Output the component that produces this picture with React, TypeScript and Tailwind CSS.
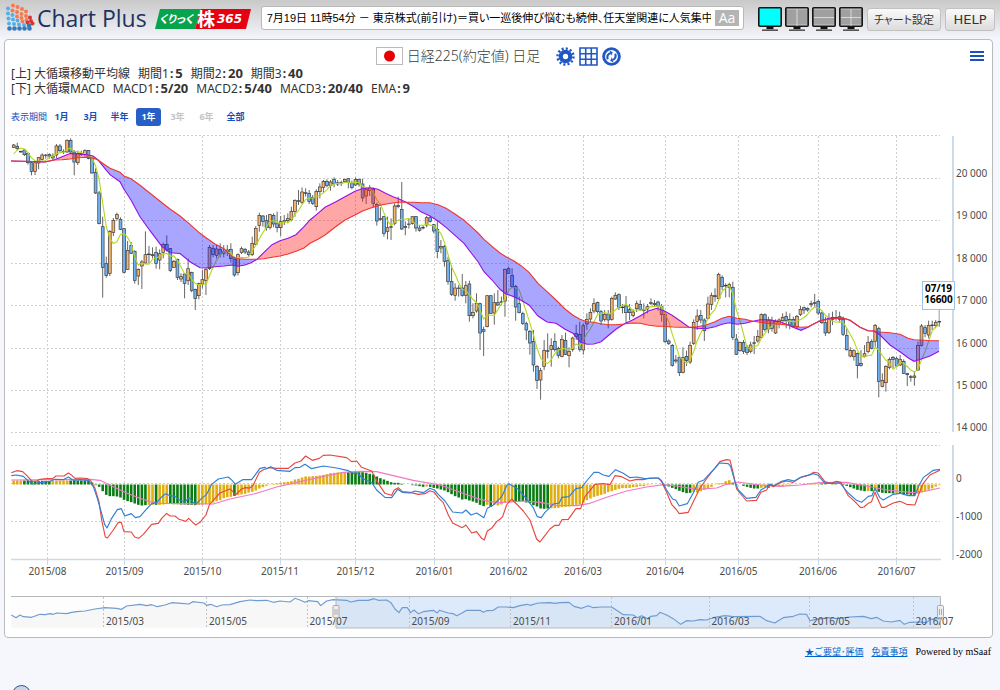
import type { ReactNode } from "react";

type Candle = [open: number, high: number, low: number, close: number];
type BandPoint = [x: number, mid: number, slow: number];

// Candle rows are kept in thirds of a pixel, measured down from `top`
const SESSIONS: { top: number; rows: Candle[] }[] = [
  {
    top: 130,
    rows: [
      [52, 42, 54, 45], [49, 38, 62, 56], [64, 62, 68, 66], [60, 57, 78, 74], [70, 68, 104, 98],
      [98, 95, 136, 124], [124, 95, 135, 98], [99, 84, 118, 82], [88, 70, 92, 75], [75, 72, 86, 76],
      [74, 70, 86, 78], [84, 70, 90, 78], [75, 42, 85, 48], [48, 42, 68, 62], [64, 58, 72, 65],
      [66, 28, 68, 31], [31, 25, 70, 66], [66, 60, 136, 96], [98, 62, 105, 70], [70, 62, 78, 74],
      [74, 58, 80, 62], [61, 60, 88, 85], [86, 84, 131, 129], [127, 115, 192, 189], [189, 183, 283, 281],
      [290, 260, 503, 412], [401, 380, 443, 436], [430, 300, 438, 304], [307, 264, 318, 271], [265, 248, 272, 254],
      [268, 262, 300, 298], [296, 294, 430, 427], [418, 333, 420, 361], [346, 336, 372, 370], [364, 361, 461, 451],
      [438, 415, 465, 418], [408, 390, 477, 396], [399, 304, 402, 374], [372, 348, 400, 374], [374, 352, 385, 377],
      [367, 350, 416, 400], [390, 358, 418, 371], [367, 338, 385, 343], [343, 316, 365, 360], [356, 354, 426, 421],
      [412, 390, 414, 394], [388, 386, 450, 442], [447, 430, 456, 440], [432, 430, 505, 460], [452, 386, 465, 416],
      [427, 425, 487, 481], [478, 476, 540, 505], [497, 458, 508, 461], [461, 420, 475, 449], [451, 415, 495, 419],
      [416, 345, 420, 352], [355, 345, 382, 374], [376, 345, 385, 357], [358, 340, 382, 372], [370, 345, 382, 365],
      [365, 345, 378, 360], [358, 340, 398, 386], [387, 380, 440, 435], [428, 370, 436, 374], [367, 350, 372, 356],
      [358, 354, 372, 366], [366, 360, 380, 374], [374, 320, 378, 340], [343, 288, 345, 295], [286, 248, 305, 256],
      [258, 255, 290, 274], [272, 255, 302, 292], [292, 252, 298, 254], [256, 250, 292, 282], [280, 245, 307, 293],
      [293, 258, 318, 275], [275, 255, 285, 272], [272, 250, 280, 266], [269, 230, 274, 244], [244, 208, 260, 211],
      [212, 180, 225, 214], [217, 172, 222, 186], [188, 175, 200, 190], [190, 180, 222, 214], [202, 195, 225, 220],
      [230, 178, 242, 184], [185, 160, 205, 171], [172, 150, 188, 154], [154, 148, 172, 166],
    ],
  },
  {
    top: 150,
    rows: [
      [107, 90, 122, 96], [88, 82, 112, 101], [98, 90, 108, 102], [98, 92, 108, 99], [95, 86, 98, 88],
      [86, 86, 115, 98], [100, 92, 118, 112], [105, 83, 108, 88], [88, 86, 110, 102], [102, 86, 155, 144],
      [138, 112, 162, 118], [122, 105, 138, 115], [118, 112, 172, 160], [163, 158, 227, 213], [208, 172, 212, 206],
      [200, 198, 260, 250], [244, 200, 268, 233], [232, 205, 270, 230], [220, 160, 226, 168], [166, 140, 175, 170],
      [178, 96, 240, 237], [229, 214, 256, 232], [222, 205, 236, 222], [220, 200, 224, 200], [200, 198, 245, 234],
      [234, 225, 245, 241], [232, 225, 238, 234], [225, 198, 232, 203], [203, 198, 218, 214], [224, 222, 250, 243],
      [238, 210, 325, 304], [294, 270, 310, 289], [289, 285, 350, 334], [332, 320, 404, 394], [394, 345, 438, 433],
      [436, 400, 452, 414], [414, 405, 440, 415], [414, 372, 440, 436], [436, 393, 460, 407], [402, 392, 515, 497],
      [497, 460, 505, 487], [483, 430, 488, 460], [461, 458, 600, 549], [539, 530, 618, 544], [530, 436, 532, 437],
      [437, 436, 492, 490], [489, 430, 524, 458], [458, 420, 468, 465], [457, 440, 466, 455], [453, 356, 500, 358],
      [356, 350, 372, 370], [376, 355, 415, 410], [409, 405, 512, 471], [461, 440, 490, 488], [491, 485, 525, 520],
      [521, 515, 570, 540], [544, 540, 614, 579], [574, 540, 665, 645], [649, 645, 717, 691], [690, 654, 749, 662],
      [649, 570, 660, 601], [602, 550, 625, 603], [598, 565, 650, 587], [574, 550, 605, 599], [595, 590, 625, 616],
      [619, 555, 622, 568], [571, 548, 615, 613], [617, 592, 652, 604], [598, 560, 605, 564], [550, 524, 570, 560],
      [553, 515, 605, 598], [600, 520, 614, 527], [522, 490, 540, 508], [507, 475, 516, 487], [483, 445, 490, 461],
      [457, 455, 490, 485], [485, 480, 525, 513], [508, 480, 515, 493], [493, 480, 535, 510], [508, 440, 512, 445],
      [447, 427, 450, 436], [434, 430, 480, 472], [471, 462, 490, 473], [468, 438, 520, 488], [479, 462, 510, 488],
      [497, 478, 502, 486], [476, 452, 486, 461], [463, 450, 482, 478], [479, 460, 505, 482], [477, 462, 490, 470],
    ],
  },
  {
    top: 260,
    rows: [
      [130, 115, 135, 128], [134, 120, 140, 130], [126, 122, 152, 138], [140, 132, 185, 163], [163, 160, 250, 245],
      [243, 238, 255, 250], [256, 252, 320, 316], [303, 285, 310, 300], [292, 290, 348, 338], [337, 262, 340, 293],
      [289, 272, 318, 302], [306, 245, 312, 256], [250, 178, 255, 187], [184, 148, 210, 168], [166, 150, 190, 180],
      [180, 175, 243, 212], [175, 110, 178, 132], [133, 98, 150, 107], [107, 85, 125, 110], [116, 38, 118, 43],
      [52, 46, 90, 80], [76, 70, 112, 78], [82, 68, 112, 74], [82, 65, 240, 232], [237, 222, 285, 283],
      [272, 245, 275, 247], [247, 240, 282, 274], [262, 255, 285, 278], [274, 245, 280, 255], [250, 228, 282, 248],
      [243, 210, 248, 229], [232, 160, 235, 164], [164, 160, 215, 208], [207, 170, 220, 182], [182, 170, 215, 205],
      [219, 178, 222, 184], [190, 175, 205, 180], [182, 160, 190, 172], [169, 155, 205, 182], [178, 160, 208, 195],
      [178, 170, 202, 200], [200, 165, 207, 169], [163, 138, 168, 148], [143, 140, 162, 150], [145, 142, 155, 150],
      [134, 122, 142, 130], [128, 102, 140, 130], [124, 118, 165, 159], [159, 155, 192, 188], [188, 170, 228, 219],
      [217, 160, 222, 175], [172, 155, 195, 178], [172, 150, 182, 175], [170, 155, 188, 178], [178, 170, 228, 223],
      [226, 205, 272, 269], [288, 262, 292, 271], [290, 268, 302, 272], [280, 278, 355, 317], [310, 270, 320, 316],
      [289, 255, 292, 281], [275, 228, 280, 247], [244, 238, 268, 265], [244, 192, 260, 196], [206, 200, 412, 364],
      [379, 340, 382, 361], [368, 316, 395, 319], [322, 292, 328, 298], [292, 288, 325, 298], [296, 290, 322, 318],
      [315, 285, 318, 298], [304, 298, 342, 340], [341, 338, 378, 344], [350, 345, 365, 352], [352, 335, 377, 348],
      [330, 245, 332, 256], [256, 192, 260, 198], [203, 195, 232, 220], [225, 182, 235, 196], [197, 182, 210, 195],
      [197, 180, 205, 187], [186, 150, 200, 184],
    ],
  },
];

// Middle and slow moving averages; rows with equal values are crossings
const BAND: BandPoint[] = [
  [11, 161, 161], [33, 161.5, 161.5], [45, 162, 162], [54, 160, 160], [62, 156.7, 159.7], [70, 153.5, 159],
  [78, 153.7, 157.7], [87, 154.7, 157.3], [93, 156, 158], [98, 160, 160], [104, 167.3, 164.3], [110, 174.7, 168.3],
  [120, 181.7, 172.3], [124, 189.3, 176], [131, 200, 178.7], [140, 216.7, 185.3], [150, 230.7, 193.3],
  [162, 246.7, 202.7], [170, 252.7, 209], [180, 253.5, 216], [190, 261.7, 224.3], [200, 267.7, 233.3],
  [206, 268, 237.7], [215, 266.7, 244], [224, 266, 248.7], [232, 265, 256.7], [238, 266.3, 258.7], [245, 265, 259.3],
  [251, 262.7, 259.3], [257, 259.3, 259.3], [264, 252.3, 258.7], [272, 244.7, 257.3], [280, 240.7, 256],
  [288, 238.3, 254], [296, 234.7, 251.3], [304, 226.7, 248], [310, 220, 243.3], [318, 213.3, 239.3],
  [325, 207.3, 235], [335, 202.3, 227.3], [345, 196.7, 220], [355, 191.3, 215], [362, 188.7, 211.3],
  [370, 187.7, 208.3], [378, 189.3, 205.7], [385, 193, 204.3], [393, 196.7, 203], [399, 199, 202.3],
  [406, 202.3, 202.3], [413, 206.3, 202.3], [421, 211.7, 202.7], [430, 216, 202.7], [438, 221, 204.7],
  [446, 227.3, 208.3], [455, 235.3, 214], [464, 243.3, 220.3], [472, 254, 227.3], [478, 261.7, 233],
  [484, 271.7, 239.3], [492, 280, 246.3], [500, 289.3, 253], [506, 294, 256.7], [514, 296.7, 261],
  [521, 300.3, 265.7], [529, 305, 272.3], [538, 316, 283.3], [547, 322, 291.7], [556, 323.3, 300],
  [565, 329.3, 309], [573, 333.3, 315.3], [580, 341.7, 319.3], [587, 344.3, 321.7], [594, 344, 322.3],
  [601, 341.7, 323.7], [609, 335, 324.7], [616, 329.3, 324.7], [624, 324, 324], [632, 320.3, 323],
  [640, 316, 323.3], [649, 310.7, 325.3], [657, 308.3, 326.3], [664, 310.7, 326.3], [672, 315.3, 327],
  [680, 320.7, 327.3], [689, 327.3, 327.3], [697, 328.3, 326.7], [706, 328.7, 325], [715, 326.7, 321.7],
  [722, 324.3, 318.3], [729, 322.7, 316.3], [737, 324.3, 318.3], [745, 323.3, 319.3], [753, 321.3, 321.3],
  [760, 319.7, 322.3], [770, 319.7, 323.7], [780, 321.7, 324.3], [788, 325, 325], [793, 327.3, 326],
  [801, 330.3, 327.3], [808, 327.3, 326.7], [813, 324.3, 324.3], [820, 320.7, 321], [830, 318.3, 319],
  [843, 318, 318], [850, 320.3, 320.3], [860, 327.3, 327.3], [868, 330.7, 330.7], [874, 331, 331],
  [880, 335, 332], [890, 345, 332.7], [900, 351.7, 334.3], [908, 357.7, 338.3], [914, 361.3, 339.7],
  [922, 358.7, 340], [930, 356, 340.7], [939, 351.3, 340.7],
];

const GREEN = "#0a7d12";
const GOLD = "#dfae12";

const HISTOGRAM: [string, number[]][] = [
  [GOLD, [12, 12, 12]],
  [GREEN, [12, 12, 12, 11, 10, 11, 11, 11]],
  [GOLD, [11, 12, 12, 12, 12]],
  [GREEN, [12, 12, 12, 12, 12, 11, 6, -2, -7, -20, -31, -35, -35, -36, -39, -46, -50, -53, -57, -61, -63, -62]],
  [GOLD, [-61, -61]],
  [GREEN, [-61]],
  [GOLD, [-61, -60, -58]],
  [GREEN, [-58, -59, -59, -60, -60, -61, -61, -62]],
  [GOLD, [-61, -61, -59, -58, -54, -50, -47, -41, -38, -37]],
  [GREEN, [-34]],
  [GOLD, [-32, -30, -28, -24, -22, -18, -12, -8, -4, -1, 2, 3, 5, 7, 8, 10, 15, 17, 21, 24, 24, 25, 26, 27, 29, 31, 34, 35, 36, 36, 36]],
  [GREEN, [37, 37, 37, 37, 37, 35, 32, 30, 24, 19, 15, 11, 7, 5, 5, 2, 0, 0, -2, -3, -5, -7]],
  [GOLD, [-6]],
  [GREEN, [-7, -10, -12, -15, -18, -23, -29, -35, -39, -45, -44, -48, -51, -55, -61, -65]],
  [GOLD, [-61]],
  [GREEN, [-67]],
  [GOLD, [-61, -63, -60, -55, -53, -51]],
  [GREEN, [-50, -50, -50, -54, -56, -62, -66, -72, -73, -72]],
  [GOLD, [-71, -71, -70, -68, -67, -66, -64, -61, -60, -55, -47, -42, -37, -34, -31, -28, -23, -20, -16, -13, -11, -11, -10, -8, -7, -5, -5, -2, -1, 0, 0, 0]],
  [GREEN, [-3, -6, -10, -14, -19, -23, -26, -25]],
  [GOLD, [-22, -24, -20, -16, -13, -7, -1, 3, 4, 10, 13]],
  [GREEN, [5, -2, 0, -4, -7, -10, -12, -12]],
  [GOLD, [-10, -8]],
  [GREEN, [-10]],
  [GOLD, [-5, -5, -6, -6, -3, -2, 0, 0, 0, 1, 1, 2, 2, 2]],
  [GREEN, [3, 1, 0, 1, 1, 0, -2, -4, -8, -12, -16, -18, -20]],
  [GOLD, [-20]],
  [GREEN, [-20]],
  [GOLD, [-20]],
  [GREEN, [-22, -25, -26, -26, -27]],
  [GOLD, [-27]],
  [GREEN, [-28, -30, -30, -31, -31]],
  [GOLD, [-28, -24, -20, -16, -12, -6, -2]],
];

const MACD_RED =
  "34,113 50,107 68,110 80,121 95,138 108,139 120,133 140,131 158,131 168,123 192,123 205,114 213,119 225,130 240,129 263,131 272,137 285,160 297,200 305,255 316,306 322,309 340,285 355,262 364,262 372,290 394,291 404,306 416,310 430,298 455,268 475,265 485,250 500,235 510,243 525,243 537,253 557,259 566,250 576,260 587,270 600,262 618,240 628,210 645,190 660,174 690,162 697,168 706,180 725,162 735,158 750,159 760,150 778,112 790,104 808,98 830,100 865,100 885,84 903,78 917,63 937,76 958,70 970,61 990,60 1040,68 1055,80 1070,78 1085,97 1115,108 1135,145 1155,175 1175,181 1183,165 1195,158 1207,170 1230,172 1255,178 1275,176 1290,167 1303,172 1315,188 1330,203 1345,240 1358,264 1387,278 1398,270 1415,294 1430,290 1445,310 1453,315 1462,288 1475,280 1490,260 1500,253 1508,245 1520,210 1535,192 1550,207 1570,228 1590,255 1610,312 1620,321 1630,308 1650,282 1665,271 1677,271 1686,254 1705,253 1728,221 1742,221 1755,185 1785,148 1810,146 1830,149 1845,122 1865,125 1890,138 1910,133 1930,134 1950,129 1975,129 1985,140 2000,172 2015,208 2028,222 2038,236 2065,232 2080,200 2100,160 2115,138 2140,105 2160,80 2180,74 2190,75 2200,115 2210,162 2225,180 2240,198 2270,196 2283,172 2300,165 2310,148 2320,155 2340,143 2360,138 2380,142 2400,128 2430,120 2440,112 2455,114 2475,140 2490,145 2510,139 2523,142 2545,182 2565,200 2582,218 2592,216 2605,205 2615,200 2625,172 2635,195 2645,217 2655,217 2680,204 2700,199 2720,208 2745,210 2755,182 2770,145 2790,120 2820,106";

const MACD_BLUE =
  "34,122 50,120 70,124 85,138 100,147 120,143 150,139 165,133 190,134 205,126 220,136 240,134 265,136 280,155 292,190 302,225 314,268 321,279 335,250 352,224 364,221 374,243 394,236 406,248 420,245 440,222 455,206 470,203 485,186 497,176 510,182 525,184 540,196 555,201 567,188 580,203 590,205 605,190 620,178 635,148 655,132 685,126 697,137 706,148 728,134 755,134 780,100 795,97 800,101 812,95 830,106 870,109 885,98 900,97 915,88 935,101 970,93 1010,99 1045,107 1060,115 1072,114 1090,132 1115,142 1130,165 1155,187 1175,188 1193,163 1207,172 1230,174 1245,168 1270,173 1290,160 1303,165 1315,178 1335,198 1358,231 1387,234 1398,225 1413,240 1430,234 1452,248 1462,220 1480,210 1500,190 1507,182 1520,152 1527,146 1555,163 1580,192 1600,218 1612,245 1624,248 1635,232 1650,218 1660,207 1678,204 1686,187 1707,185 1728,161 1745,158 1760,138 1782,112 1795,112 1810,120 1827,124 1847,104 1870,115 1890,128 1910,126 1935,131 1975,129 1985,137 2000,165 2018,192 2028,196 2038,213 2062,206 2080,174 2095,142 2112,135 2130,115 2147,98 2158,84 2185,86 2192,94 2205,140 2215,165 2240,190 2268,187 2283,165 2300,155 2310,148 2322,152 2345,139 2365,134 2383,138 2405,126 2440,116 2455,121 2475,145 2500,145 2520,144 2545,174 2570,196 2585,202 2605,184 2616,182 2625,160 2640,188 2650,195 2680,178 2700,175 2725,182 2745,182 2755,155 2770,128 2800,106 2820,103";

const MACD_PINK =
  "34,135 270,133 300,136 335,153 380,174 420,190 450,200 480,205 640,207 690,192 770,175 830,156 900,140 970,124 1030,112 1080,109 1130,110 1180,122 1240,136 1320,150 1370,168 1430,190 1470,200 1500,203 1575,198 1620,202 1670,211 1730,212 1770,205 1820,187 1880,168 1940,156 1990,149 2030,153 2090,163 2150,159 2180,148 2215,141 2280,150 2340,154 2400,150 2460,143 2540,142 2600,153 2660,165 2740,173 2780,168 2820,159";

const OVERVIEW =
  "34,90 48,98 60,90 70,95 95,97 120,88 135,89 150,86 160,88 170,84 200,86 215,82 230,80 255,78 285,72 315,68 350,70 365,73 380,63 420,58 440,62 455,59 472,65 495,60 515,53 545,55 567,57 578,50 612,54 620,61 632,58 650,65 665,60 690,59 720,50 750,45 770,47 800,46 820,52 840,48 870,51 885,40 900,45 915,52 925,47 953,50 962,62 980,48 1000,44 1040,46 1052,51 1075,46 1105,46 1122,41 1135,46 1160,45 1173,53 1185,72 1197,83 1207,68 1222,68 1232,83 1242,75 1255,86 1270,80 1300,76 1312,84 1318,76 1345,84 1360,86 1370,92 1385,85 1400,76 1440,76 1450,82 1460,77 1480,76 1495,66 1520,66 1540,68 1560,62 1582,58 1590,61 1615,54 1650,53 1665,55 1680,53 1707,52 1712,56 1722,64 1745,70 1765,62 1780,68 1805,66 1835,66 1850,76 1870,89 1900,90 1912,98 1925,92 1945,102 1952,94 1970,92 1980,82 2000,90 2020,101 2042,118 2060,107 2080,108 2100,104 2120,105 2140,98 2175,92 2200,95 2280,94 2300,107 2325,114 2335,107 2350,98 2380,94 2400,87 2420,88 2430,107 2450,103 2485,98 2510,101 2550,96 2590,94 2615,101 2630,97 2650,108 2675,111 2700,106 2713,118 2730,112 2760,111 2780,113 2790,103 2820,101";

const MONTHS: [number, string][] = [
  [47.5, "2015/08"], [124.5, "2015/09"], [202.5, "2015/10"], [280, "2015/11"], [355.5, "2015/12"], [434.5, "2016/01"],
  [508.5, "2016/02"], [583, "2016/03"], [665, "2016/04"], [738.5, "2016/05"], [818, "2016/06"], [896.5, "2016/07"],
];

const OVERVIEW_MONTHS: [number, string][] = [
  [103.5, "2015/03"], [206.5, "2015/05"], [307, "2015/07"], [409, "2015/09"], [510.5, "2015/11"],
  [611.5, "2016/01"], [709, "2016/03"], [809.5, "2016/05"], [913, "2016/07"],
];

const PRICE_LABELS: [number, string][] = [
  [177, "20 000"], [219, "19 000"], [262, "18 000"], [304, "17 000"], [347, "16 000"], [389, "15 000"], [431, "14 000"],
  [482, "0"], [520, "-1000"], [558, "-2000"],
];

const H_GRID = [135.5, 178.5, 220.5, 263.5, 305.5, 348.5, 390.5, 432.5, 445.5, 483.5, 521.5];

const slotX = (i: number) => 13.7 + i * 3.56;

const candles = SESSIONS.flatMap(({ top, rows }) => rows.map((row) => row.map((v) => top + v / 3)));

const bars = HISTOGRAM.flatMap(([color, values]) => values.map((value) => ({ color, value })));

// First four sessions have no full window, so their averages are given
const fastAverage = candles
  .map((_, i) =>
    i < 4
      ? [154, 150, 148, 149][i]
      : candles.slice(i - 4, i + 1).reduce((sum, c) => sum + c[3], 0) / 5,
  )
  .map((y, i) => `${slotX(i)},${y.toFixed(1)}`)
  .join(" ");

function bandAreas() {
  const areas: { points: string; fill: string }[] = [];
  let run: BandPoint[] = [];
  BAND.forEach((point) => {
    run.push(point);
    if ((point[1] === point[2] && run.length > 1) || point === BAND[BAND.length - 1]) {
      const upper = run.map(([x, mid]) => `${x},${mid}`);
      const lower = run.map(([x, , slow]) => `${x},${slow}`).reverse();
      const falling = run.some(([, mid, slow]) => mid > slow);
      areas.push({ points: [...upper, ...lower].join(" "), fill: falling ? "#1a14ff" : "#ff1414" });
      run = [point];
    }
  });
  return areas;
}

const AXIS_TEXT = "font-['Noto_Sans',sans-serif] text-[10px] fill-[#4c4c4c]";

function StockChart() {
  return (
    <svg viewBox="5 128 987 509" className="block w-full" role="img" aria-label="日経225 日足チャート">
      {/* Grid */}
      <g stroke="#cfcfcf" strokeWidth="1" strokeDasharray="2 2">
        {H_GRID.map((y) => (
          <line key={y} x1="11" x2="940" y1={y} y2={y} />
        ))}
        {MONTHS.map(([x]) => (
          <path key={x} d={`M${Math.floor(x) + 0.5} 136V432M${Math.floor(x) + 0.5} 445V559`} />
        ))}
      </g>
      <path d="M11 559.5H941" stroke="#ccd9e8" strokeWidth="1.5" />
      {MONTHS.map(([x]) => (
        <path key={x} d={`M${Math.floor(x) + 0.5} 560v5`} stroke="#ccd9e8" />
      ))}
      <path d="M953 136V432M953 445V560" stroke="#bccfe4" strokeWidth="1.5" />

      {/* Candles */}
      {candles.map(([open, high, low, close], i) => {
        const x = slotX(i);
        const top = Math.min(open, close);
        return (
          <g key={i}>
            <line x1={x} x2={x} y1={high} y2={low} stroke="#666" strokeWidth="1" />
            <rect
              x={x - 1.4}
              y={top}
              width="2.8"
              height={Math.max(Math.abs(close - open), 0.6)}
              fill={close > open ? "#6db4f5" : "#f7b26b"}
              stroke="#3d3d3d"
              strokeWidth="0.7"
            />
          </g>
        );
      })}
      <polyline points={fastAverage} fill="none" stroke="#b0d820" strokeWidth="1.1" strokeLinejoin="round" />
      {bandAreas().map(({ points, fill }) => (
        <polygon key={points} points={points} fill={fill} fillOpacity="0.38" />
      ))}
      <polyline points={BAND.map(([x, mid]) => `${x},${mid}`).join(" ")} fill="none" stroke="#9410e6" strokeWidth="1.1" />
      <polyline points={BAND.map(([x, , slow]) => `${x},${slow}`).join(" ")} fill="none" stroke="#f0352b" strokeWidth="1.1" />

      {/* MACD */}
      {bars.map(({ color, value }, i) => (
        <rect
          key={i}
          x={slotX(i) - 1.3}
          y={value > 0 ? 484.5 - value / 3 : 484.5}
          width="2.6"
          height={Math.abs(value) / 3}
          fill={color}
        />
      ))}
      <g transform="translate(0 435) scale(0.3333)" fill="none" strokeWidth="3.4" strokeLinejoin="round">
        <polyline points={MACD_PINK} stroke="#f078c4" />
        <polyline points={MACD_RED} stroke="#e8463f" />
        <polyline points={MACD_BLUE} stroke="#2f7fd6" />
      </g>

      {/* Axis labels */}
      {MONTHS.map(([x, label]) => (
        <text key={label} x={x} y="575" textAnchor="middle" className={AXIS_TEXT}>
          {label}
        </text>
      ))}
      {PRICE_LABELS.map(([y, label]) => (
        <text key={label} x="956" y={y} className={AXIS_TEXT}>
          {label}
        </text>
      ))}

      {/* Last price flag */}
      <path d="M939.5 309V321" stroke="#9cc4ea" />
      <rect x="922.5" y="281.5" width="32" height="28" fill="#fff" stroke="#9cc4ea" />
      <g className="font-['Noto_Sans',sans-serif] text-[10px] font-bold" textAnchor="middle">
        <text x="938.5" y="292">07/19</text>
        <text x="938.5" y="303">16600</text>
      </g>

      {/* Overview strip */}
      <rect x="11" y="597" width="325" height="31" fill="#fdfdfd" />
      <rect x="336" y="597" width="604" height="31" fill="#dceafb" />
      <g stroke="#c0c6ce" strokeDasharray="2 2">
        {OVERVIEW_MONTHS.map(([x]) => (
          <line key={x} x1={Math.floor(x) + 0.5} x2={Math.floor(x) + 0.5} y1="597" y2="628" />
        ))}
      </g>
      <g transform="translate(0 585) scale(0.3333)">
        <polygon points={`34,128 ${OVERVIEW} 2820,128`} fill="#808890" fillOpacity="0.05" />
        <polyline points={OVERVIEW} fill="none" stroke="#6f9bd0" strokeWidth="3.4" strokeLinejoin="round" />
      </g>
      {OVERVIEW_MONTHS.map(([x, label]) => (
        <text key={label} x={x + 2.5} y="625" className={AXIS_TEXT}>
          {label}
        </text>
      ))}
      <path d="M11 596.5H940.5V628H336V596.5" fill="none" stroke="#b4b8bc" />
      {[336, 940.5].map((x) => (
        <g key={x}>
          <rect x={x - 3} y="605.5" width="6" height="12" rx="1" fill="#eee" stroke="#aaa" />
          <path d={`M${x - 1} 609v6M${x + 1} 609v6`} stroke="#999" strokeWidth="0.8" />
        </g>
      ))}
    </svg>
  );
}

const LOGO_DOTS: [number, number, number][] = [
  [13, 5.5, 1], [17.5, 7, 1], [22, 9, 1], [26, 11.5, 1],
  [8, 8.5, 0], [12.5, 10.5, 1], [17, 12, 1], [21.5, 14, 1], [26, 16, 1], [30, 17.5, 2],
  [8, 13.5, 0], [12.5, 15, 0], [17, 16.5, 1], [21.5, 18, 1], [26.5, 20, 1], [31, 21, 2],
  [8.5, 18.5, 0], [13, 19.5, 0], [17.5, 20.5, 0], [22.5, 21.5, 1], [27.5, 22.5, 2], [32.5, 23.5, 2],
  [9, 23.5, 0], [14, 24, 0], [19, 24.5, 0], [24, 25, 0], [29, 25.5, 3],
  [9.5, 28.5, 3], [14.5, 28.5, 3], [19.5, 28.5, 3], [24.5, 28.5, 3], [29.5, 28.5, 3],
];
const DOT_COLORS = ["#4fb0ea", "#f47a50", "#e03030", "#3a78b8"];

function Logo() {
  return (
    <h1 className="flex items-center">
      <svg viewBox="4 3 32 30" className="h-[30px] w-8" aria-hidden="true">
        {LOGO_DOTS.map(([x, y, c]) => (
          <circle key={`${x}-${y}`} cx={x} cy={y} r={c === 3 ? 2.3 : 2} fill={DOT_COLORS[c]} />
        ))}
      </svg>
      <span className="ml-px font-['Open_Sans',sans-serif] text-[23px] leading-[30px] text-[#1d3263]">Chart Plus</span>
    </h1>
  );
}

function KabuBadge() {
  return (
    <svg viewBox="0 0 96 20" className="h-5 w-24" role="img" aria-label="くりっく株365">
      <path d="M5 0H46L40 20H0Z" fill="#06a44c" />
      <path d="M46 0H96L91 20H40Z" fill="#e60012" />
      <g fill="#fff" className="font-['DejaVu_Sans','Noto_Sans_CJK_JP',sans-serif] font-bold italic">
        <text x="4" y="14" className="text-[11px] [font-feature-settings:'palt']">くりっく</text>
        <text x="42" y="17" className="text-[18px] not-italic">株</text>
        <text x="62" y="14" className="text-[12px]">365</text>
      </g>
    </svg>
  );
}

const SCREEN_SPLITS = [
  { label: "1画面", d: "" },
  { label: "左右2画面", d: "M12 2v17" },
  { label: "上下2画面", d: "M2 10.5h20" },
  { label: "4画面", d: "M12 2v17M2 10.5h20" },
];

function ScreenPicker() {
  return (
    <div className="flex gap-[3px]">
      {SCREEN_SPLITS.map(({ label, d }, i) => (
        <button key={label} type="button" aria-label={label} className="h-6 w-6">
          <svg viewBox="0 0 24 24" className="size-6">
            <rect x="0.8" y="0.8" width="22.4" height="18.4" rx="1" fill={i === 0 ? "#00ffff" : "#a0a0a0"} stroke="#161616" strokeWidth="1.6" />
            {i > 0 && <path d="M2 2.2h20M2 17.8h20" stroke="#c4c4c4" strokeWidth="0.8" />}
            <path d={d} stroke="#d8d8d8" strokeWidth="1" />
            <path d="M8.5 20h7v2.2h-7z" fill="#111" />
            <path d="M4 23.2h16" stroke="#555" strokeWidth="1.6" />
          </svg>
        </button>
      ))}
    </div>
  );
}

function HeaderButton({ className, children }: { className: string; children: ReactNode }) {
  return (
    <button
      type="button"
      className={`h-[23px] rounded-[3px] border border-[#c2c2c2] bg-linear-to-b from-[#fafafa] to-[#dcdcdc] text-[#333] ${className}`}
    >
      {children}
    </button>
  );
}

function Header() {
  return (
    <header className="flex h-[39px] items-start bg-linear-to-b from-[#c9c9c9] to-[#f5f6fc] pr-[5px] pl-1">
      <div className="mt-[3px]">
        <Logo />
      </div>
      <div className="mt-[9px] ml-2">
        <KabuBadge />
      </div>
      <div className="mt-[6px] ml-2.5 flex h-6 min-w-0 flex-1 items-center rounded-[3px] border border-[#b8b8b8] bg-white pr-1 pl-[5px]">
        <p className="min-w-0 flex-1 overflow-hidden font-['Liberation_Sans','Noto_Sans_CJK_JP',sans-serif] text-[11px] leading-5 whitespace-nowrap text-black [font-feature-settings:'palt']">
          7月19日 11時54分 － 東京株式(前引け)＝買い一巡後伸び悩むも続伸、任天堂関連に人気集中
        </p>
        <button type="button" aria-label="文字サイズ" className="ml-1 h-4 w-6 bg-[#b4b4b4] font-['Open_Sans',sans-serif] text-[14px] leading-4 text-white">
          Aa
        </button>
      </div>
      <div className="mt-[7px] ml-3.5">
        <ScreenPicker />
      </div>
      <div className="mt-2 ml-1 flex gap-1">
        <HeaderButton className="w-[74px] font-['Noto_Sans_CJK_JP',sans-serif] text-[11px] [font-feature-settings:'palt']">チャート設定</HeaderButton>
        <HeaderButton className="w-[50px] font-['DejaVu_Sans',sans-serif] text-[13px]">HELP</HeaderButton>
      </div>
    </header>
  );
}

function GearIcon() {
  return (
    <svg viewBox="0 0 20 20" className="size-[19px]">
      <circle cx="10" cy="10" r="5" fill="none" stroke="#1f57c4" strokeWidth="4.4" />
      <circle cx="10" cy="10" r="8.4" fill="none" stroke="#1f57c4" strokeWidth="2.6" strokeDasharray="2.2 2.198" />
    </svg>
  );
}

function GridIcon() {
  return (
    <svg viewBox="0 0 19 19" className="size-[19px]" fill="none" stroke="#1f57c4" strokeWidth="1.6">
      <path d="M1 1H18V18H1ZM1 6.7H18M1 12.3H18M6.7 1V18M12.3 1V18" />
    </svg>
  );
}

function RefreshIcon() {
  return (
    <svg viewBox="0 0 20 20" className="size-[19px]">
      <circle cx="10" cy="10" r="8.3" fill="none" stroke="#1f57c4" strokeWidth="3" />
      <path d="M6 13C5 9.5 6.6 7 9 6.2M14 7C15 10.5 13.4 13 11 13.8" fill="none" stroke="#1f57c4" strokeWidth="2.2" />
      <path d="M8 3.6L11.4 5.4L9.6 9.2ZM12 16.4L8.6 14.6L10.4 10.8Z" fill="#1f57c4" />
    </svg>
  );
}

function ChartTitle() {
  return (
    <div className="relative flex h-5 items-center justify-center">
      <svg viewBox="0 0 27 18" className="h-[18px] w-[27px]" role="img" aria-label="日本">
        <rect x="0.5" y="0.5" width="26" height="17" fill="#fff" stroke="#bbb" />
        <circle cx="13.5" cy="9" r="5.5" fill="#e60000" />
      </svg>
      <h2 className="ml-1 font-['Noto_Sans','Noto_Sans_CJK_JP',sans-serif] text-[14px] leading-5 font-light text-[#3c3c3c]">
        日経225(約定値) 日足
      </h2>
      <div className="ml-4 flex items-center gap-1">
        <button type="button" aria-label="設定"><GearIcon /></button>
        <button type="button" aria-label="データ表"><GridIcon /></button>
        <button type="button" aria-label="更新"><RefreshIcon /></button>
      </div>
      <button type="button" aria-label="メニュー" className="absolute top-[5px] right-2 flex w-3.5 flex-col gap-[2px]">
        <span className="h-[2px] bg-[#1b50bd]" />
        <span className="h-[2px] bg-[#1b50bd]" />
        <span className="h-[2px] bg-[#1b50bd]" />
      </button>
    </div>
  );
}

const INDICATORS = [
  { name: "[上] 大循環移動平均線", params: [["期間1", "5"], ["期間2", "20"], ["期間3", "40"]] },
  { name: "[下] 大循環MACD", params: [["MACD1", "5/20"], ["MACD2", "5/40"], ["MACD3", "20/40"], ["EMA", "9"]] },
];

function Indicators() {
  return (
    <div className="pl-1.5 font-['Noto_Sans','Noto_Sans_CJK_JP',sans-serif] text-[12px] leading-[15px] text-[#333]">
      {INDICATORS.map(({ name, params }) => (
        <p key={name} className="flex h-[15px] gap-2">
          <span>{name}</span>
          {params.map(([key, value]) => (
            <span key={key}>
              {key}
              <b className="ml-px">:</b>
              <b className="ml-0.5 text-[13px]">{value}</b>
            </span>
          ))}
        </p>
      ))}
    </div>
  );
}

const RANGES = ["1月", "3月", "半年", "1年", "3年", "6年", "全部"];
const DISABLED_RANGES = ["3年", "6年"];

function rangeClass(range: string) {
  if (range === "1年") return "bg-[#275fc6] text-white";
  return DISABLED_RANGES.includes(range) ? "text-[#c4c4c4]" : "text-[#1450b8]";
}

function RangePicker() {
  return (
    <div className="mt-3 flex h-[18px] items-center gap-1 pl-1.5 font-['Noto_Sans','Noto_Sans_CJK_JP',sans-serif] text-[9px]">
      <span className="w-[34px] whitespace-nowrap text-[#1450b8]">表示期間</span>
      {RANGES.map((range) => (
        <button
          key={range}
          type="button"
          disabled={DISABLED_RANGES.includes(range)}
          className={`h-[18px] w-[25px] rounded-[3px] font-bold leading-4 ${rangeClass(range)}`}
        >
          {range}
        </button>
      ))}
    </div>
  );
}

export default function App() {
  return (
    <div className="flex min-h-screen flex-col bg-[#f5f7fd]">
      <Header />
      <main className="mr-[7px] ml-1 rounded-[4px] border border-[#b9bbbd] bg-white pt-[6px]">
        <ChartTitle />
        <Indicators />
        <RangePicker />
        <div className="mt-[2px]">
          <StockChart />
        </div>
      </main>
      <footer className="mt-[6px] flex items-center justify-end gap-2 pr-[9px] text-[10px] leading-4">
        <a href="#feedback" className="font-['Noto_Sans_CJK_JP',sans-serif] text-[9px] text-[#0066cc] underline">★ご要望･評価</a>
        <a href="#disclaimer" className="font-['Noto_Sans_CJK_JP',sans-serif] text-[9px] text-[#0066cc] underline">免責事項</a>
        <span className="font-['Liberation_Serif',serif] text-black">Powered by mSaaf</span>
      </footer>
      <div className="mt-auto h-[5px] overflow-hidden pl-3">
        <div className="size-[19px] rounded-full border border-[#2f5685] bg-[#c4d6ea]" />
      </div>
    </div>
  );
}
